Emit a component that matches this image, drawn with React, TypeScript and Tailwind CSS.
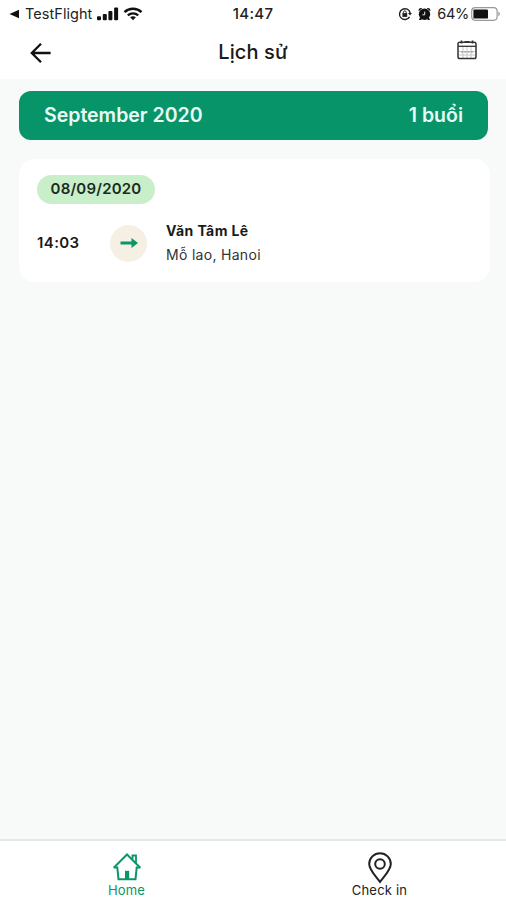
import type { ReactNode } from "react"

interface Session {
  date: string
  time: string
  name: string
  place: string
}

const sessions: Session[] = [
  { date: "08/09/2020", time: "14:03", name: "Văn Tâm Lê", place: "Mỗ lao, Hanoi" },
]

function StatusBar() {
  return (
    <div className="grid h-[27px] grid-cols-[1fr_auto_1fr] items-center text-[15px] leading-none text-[#222]">
      <div className="flex items-center pl-[9px]">
        <svg width="11" height="10" viewBox="0 0 11 10" fill="#111">
          <path d="M0.5 5 10 0.8v8.4z" />
        </svg>
        <span className="mt-px ml-[5px] text-[14.5px] tracking-[0.05px]">TestFlight</span>
        <svg className="ml-[5px]" width="22" height="14" viewBox="0 0 22 14" fill="#111">
          <rect x="0" y="9.3" width="4" height="4" rx="1" />
          <rect x="5.8" y="7" width="4" height="6.3" rx="1" />
          <rect x="11.4" y="4" width="4" height="9.3" rx="1" />
          <rect x="17.1" y="0.5" width="4" height="12.8" rx="1" />
        </svg>
        <svg className="ml-1" width="20" height="14" viewBox="0 0 20 14" fill="none" stroke="#111">
          <path d="M1.5 5.2C6.3.7 13.7.7 18.5 5.2" strokeWidth="2.5" />
          <path d="M4.8 8.3c3-2.7 7.4-2.7 10.4 0" strokeWidth="2.3" />
          <path d="M7.1 10.2c1.7-1.4 4.1-1.4 5.8 0L10 13.3z" fill="#111" stroke="none" />
        </svg>
      </div>
      <span className="text-[15px] font-medium tracking-[0.3px]">14:47</span>
      <div className="flex items-center justify-end pr-[6px]">
        <svg width="14" height="14" viewBox="0 0 14 14" fill="none" stroke="#222" strokeWidth="1.4">
          <path d="M11.6 9.8A5.4 5.4 0 1 1 12.2 6" />
          <path d="M10 6h4l-2 2.6z" fill="#222" stroke="none" />
          <rect x="4.4" y="6.1" width="4.8" height="3.8" fill="#222" stroke="none" />
          <path d="M5.4 6.5V5.3a1.4 1.4 0 0 1 2.8 0v1.2" strokeWidth="1" />
        </svg>
        <svg className="ml-[6px]" width="13" height="14" viewBox="0 0 13 14" fill="#111">
          <circle cx="6.5" cy="7.3" r="5.7" />
          <path d="M.6 4.2C.3 1.8 2 .6 4.3 1.2zM12.4 4.2C12.7 1.8 11 .6 8.7 1.2zM2 10.2 1 13h2l1-1zM11 10.2l1 2.8h-2l-1-1z" />
          <path d="M6.7 4.6v3.2H4.4" fill="none" stroke="#fff" strokeWidth="0.9" />
        </svg>
        <span className="mt-px ml-[6px] text-[14.5px] tracking-[-0.3px]">64%</span>
        <svg className="ml-[2px]" width="29" height="14" viewBox="0 0 29 14">
          <rect x="0.7" y="0.7" width="25.4" height="12.6" rx="3.5" fill="none" stroke="#999" strokeWidth="1.2" />
          <rect x="2.4" y="2.4" width="14.6" height="9.2" rx="1.2" fill="#111" />
          <path d="M27.3 4.8c2 .7 2 3.7 0 4.4z" fill="#999" />
        </svg>
      </div>
    </div>
  )
}

function Header() {
  return (
    <div className="grid h-[52px] grid-cols-[1fr_auto_1fr] items-center">
      <svg className="ml-[30px]" width="22" height="20" viewBox="0 0 22 20" fill="none" stroke="#111" strokeWidth="2.3">
        <path d="M11 .8 1.8 10l9.2 9.2M1.8 10h18.8" />
      </svg>
      <h1 className="mb-[2px] text-xl leading-6 font-medium tracking-[0.1px] text-[#1a1a1a]">Lịch sử</h1>
      <svg className="mr-[29px] mb-[6px] justify-self-end" width="20" height="20" viewBox="0 0 20 20" fill="none" stroke="#333">
        <path d="M6 7v11M10 7v11M14 7v11M2 11.5h16M2 15h16" stroke="#bbb" strokeWidth="0.8" />
        <path d="M4 12h12.5" stroke="#888" strokeDasharray="2 1.3" />
        <rect x="1" y="2.2" width="18" height="16.4" rx="1.8" strokeWidth="1.5" />
        <path d="M1 6.3h18" strokeWidth="1.3" />
        <path d="M4.5 .5v3M15.500 .5v3" strokeWidth="1.6" />
        <path d="M7.500 2h5" strokeWidth="2" />
      </svg>
    </div>
  )
}

function SessionCard({ date, time, name, place }: Session) {
  return (
    <div className="mt-[19px] mr-[-2px] h-[123px] rounded-2xl bg-white px-[18px] pt-[16px]">
      <div className="flex h-[29px] w-[118px] items-center justify-center rounded-full bg-[#c9efca] text-[15px] font-semibold tracking-[0.2px] text-[#1c2b1f]">
        {date}
      </div>
      <div className="mt-[15px] flex h-12 items-center">
        <span className="w-[73px] text-[15px] font-semibold tracking-[0.4px]">{time}</span>
        <div className="flex size-[37px] items-center justify-center rounded-full bg-[#f5f0e3]">
          <svg width="18" height="12" viewBox="0 0 18 12" fill="#0b9666">
            <path d="M.5 4.5h11V1L18 6l-6.500 5V7.500H.5z" />
          </svg>
        </div>
        <div className="ml-[19px] text-[14px] leading-6">
          <div className="font-bold tracking-[0.4px]">{name}</div>
          <div className="tracking-[0.3px] text-[#333]">{place}</div>
        </div>
      </div>
    </div>
  )
}

function Tab({ label, active, children }: { label: string; active?: boolean; children: ReactNode }) {
  return (
    <div className={`flex flex-1 flex-col items-center pt-[11px] ${active ? "text-[#0b9666]" : "text-[#222]"}`}>
      <div className="flex h-[31px] items-start">{children}</div>
      <span className="text-[13px] leading-[14px] tracking-[0.2px]">{label}</span>
    </div>
  )
}

export default function App() {
  return (
    <div className="flex h-[900px] w-[506px] flex-col bg-[#f8fafa] font-['Inter','Noto_Sans',sans-serif] text-[#1a1a1a]">
      <div className="bg-white">
        <StatusBar />
        <Header />
      </div>

      <main className="flex-1 pt-3 pr-[18px] pl-[19px]">
        <div className="flex h-[49px] items-center justify-between rounded-xl bg-[#079468] px-[25px] text-[19.5px] font-semibold text-[#e9fbf4]">
          <span>September 2020</span>
          <span>1 buổi</span>
        </div>
        {sessions.map((s) => (
          <SessionCard key={s.date + s.time} {...s} />
        ))}
      </main>

      <nav className="flex h-[61px] border-t-2 border-[#e3e7e7] bg-white">
        <Tab label="Home" active>
          <svg width="30" height="30" viewBox="0 0 30 30" fill="none" stroke="currentColor" strokeWidth="2">
            <path d="M2 15.500 15 2.500l13 13" />
            <path d="M1.500 15.500h3.800l1.200 11.700h17l1.200-11.700h3.800" />
            <path d="M20.500 7.500V3.500H24v7.500" strokeWidth="1.8" />
            <path d="M13 27v-8.200h4.200V27z" fill="currentColor" stroke="none" />
          </svg>
        </Tab>
        <Tab label="Check in">
          <svg width="26" height="32" viewBox="0 0 26 32" fill="none" stroke="currentColor" strokeWidth="2">
            <path d="M13 30C9 24.500 2.200 18 2.200 12a10.800 10.800 0 0 1 21.600 0c0 6-6.800 12.500-10.800 18z" />
            <circle cx="13" cy="12" r="4.800" />
          </svg>
        </Tab>
      </nav>
    </div>
  )
}
